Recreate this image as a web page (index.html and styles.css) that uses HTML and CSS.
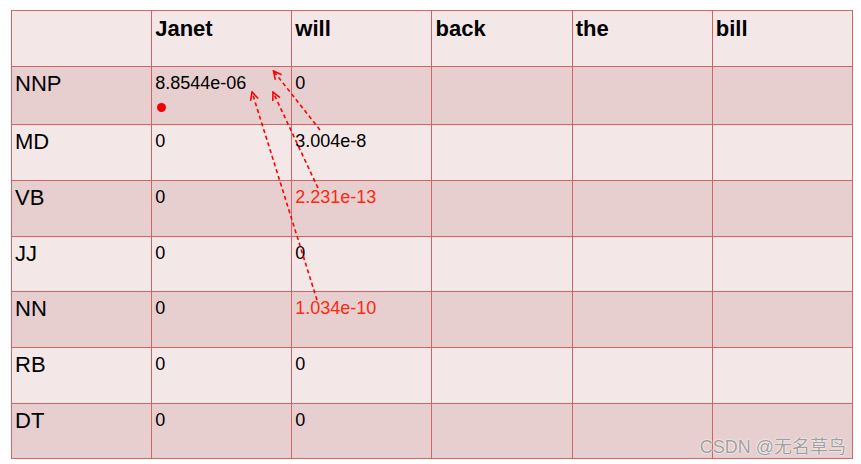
FILE: index.html
```html
<!DOCTYPE html>
<html>
<head>
<meta charset="utf-8">
<link rel="stylesheet" href="styles.css">
</head>
<body>
<div class="page">
  <table class="grid">
    <colgroup>
      <col class="c"><col class="c"><col class="c"><col class="c"><col class="c"><col class="c">
    </colgroup>
    <tr class="light head">
      <th></th><th>Janet</th><th>will</th><th>back</th><th>the</th><th>bill</th>
    </tr>
    <tr class="dark tall">
      <td class="tag">NNP</td><td><span>8.8544e-06</span><span class="dot"></span></td><td>0</td><td></td><td></td><td></td>
    </tr>
    <tr class="light">
      <td class="tag">MD</td><td>0</td><td>3.004e-8</td><td></td><td></td><td></td>
    </tr>
    <tr class="dark">
      <td class="tag">VB</td><td>0</td><td class="hot">2.231e-13</td><td></td><td></td><td></td>
    </tr>
    <tr class="light short">
      <td class="tag">JJ</td><td>0</td><td>0</td><td></td><td></td><td></td>
    </tr>
    <tr class="dark">
      <td class="tag">NN</td><td>0</td><td class="hot">1.034e-10</td><td></td><td></td><td></td>
    </tr>
    <tr class="light">
      <td class="tag">RB</td><td>0</td><td>0</td><td></td><td></td><td></td>
    </tr>
    <tr class="dark short">
      <td class="tag">DT</td><td>0</td><td>0</td><td></td><td></td><td></td>
    </tr>
  </table>
  <svg class="arrows" width="861" height="464" viewBox="0 0 861 464">
    <defs>
      <marker id="head" viewBox="0 0 10 10" refX="9" refY="5" markerWidth="10" markerHeight="10" markerUnits="userSpaceOnUse" orient="auto">
        <path d="M1,1 L9,5 L1,9" fill="none" stroke="#f00" stroke-width="1.6"/>
      </marker>
    </defs>
    <line x1="320" y1="130" x2="273.5" y2="71" class="dash" marker-end="url(#head)"/>
    <line x1="318" y1="188" x2="273" y2="92" class="dash" marker-end="url(#head)"/>
    <line x1="317" y1="300" x2="252" y2="92" class="dash" marker-end="url(#head)"/>
  </svg>
  <div class="mark">CSDN @无名草鸟</div>
</div>
</body>
</html>
```
FILE: styles.css
```css
html, body {
  margin: 0;
  padding: 0;
  background: #ffffff;
}
.page {
  position: relative;
  width: 861px;
  height: 464px;
  padding: 10px 0 0 11px;
  box-sizing: border-box;
  font-family: "Liberation Sans", Arial, sans-serif;
}
.grid {
  border-collapse: collapse;
  table-layout: fixed;
  width: 842px;
}
.grid .c {
  width: 140px;
}
.grid th, .grid td {
  border: 1px solid #cf6464;
  height: 56px;
  padding: 6px 3px 0 3px;
  vertical-align: top;
  text-align: left;
  box-sizing: border-box;
  font-size: 18px;
  color: #000;
  line-height: 21px;
}
.grid .tall td {
  height: 58px;
}
.grid .short td {
  height: 55px;
}
.grid th {
  font-size: 22px;
  font-weight: bold;
  line-height: 26px;
  padding-top: 5px;
}
.grid td.tag {
  font-size: 22px;
  line-height: 26px;
  padding-top: 4px;
}
.light {
  background: #f4e7e7;
}
.dark {
  background: #e8cfcf;
}
.grid td.hot {
  color: #fa2a10;
}
.dot {
  display: block;
  width: 9px;
  height: 9px;
  border-radius: 50%;
  background: #f40000;
  margin: 9px 0 0 2px;
}
.arrows {
  position: absolute;
  left: 0;
  top: 0;
  pointer-events: none;
}
.dash {
  stroke: #f00;
  stroke-width: 1.6;
  stroke-dasharray: 4 3;
}
.mark {
  position: absolute;
  right: 15px;
  top: 432px;
  font-size: 18px;
  color: #a0a0a0;
  font-family: "Liberation Sans", "Noto Sans CJK SC", sans-serif;
  text-shadow: 0 0 2px #fff, 0 0 1px #fff;
}
```
